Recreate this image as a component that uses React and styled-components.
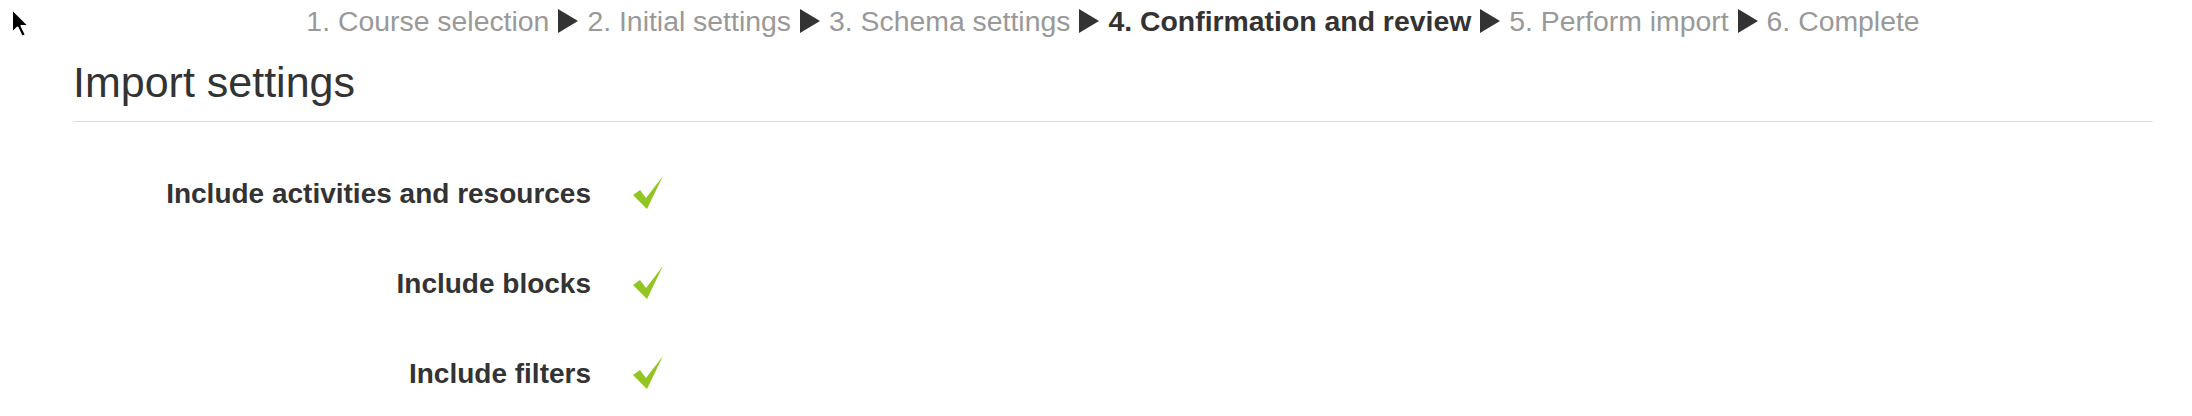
import React from 'react'
import styled, { createGlobalStyle } from 'styled-components'

const GlobalStyle = createGlobalStyle`
  body {
    margin: 0;
    background: #fff;
    font-family: "Liberation Sans", Arial, sans-serif;
    color: #333;
  }
`

const Page = styled.div`
  position: relative;
  padding: 0 39px 0 73px;
  height: 416px;
  overflow: hidden;
`

const Cursor = styled.svg`
  position: absolute;
  left: 10px;
  top: 7px;
`

const Crumbs = styled.div`
  display: flex;
  justify-content: center;
  align-items: center;
  height: 42px;
  font-size: 28.4px;
  color: #999;
  white-space: nowrap;
`

const Step = styled.span`
  color: ${(p) => (p.$current ? '#333' : '#999')};
  font-weight: ${(p) => (p.$current ? 'bold' : 'normal')};
`

const Arrow = styled.span`
  display: inline-block;
  width: 0;
  height: 0;
  margin: 0 9px;
  border-top: 12px solid transparent;
  border-bottom: 12px solid transparent;
  border-left: 20px solid #333;
`

const Heading = styled.h2`
  margin: 0;
  padding: 15px 0 14px;
  font-size: 43px;
  font-weight: normal;
  line-height: 50px;
  color: #333;
  border-bottom: 1px solid #dcdcdc;
`

const Rows = styled.div`
  display: grid;
  grid-template-columns: 518px 1fr;
  column-gap: 41px;
  padding-top: 52px;
`

const Label = styled.div`
  text-align: right;
  font-weight: bold;
  font-size: 28px;
  line-height: 40px;
  height: 88px;
`

const Value = styled.div`
  height: 88px;
  display: flex;
  align-items: flex-start;
  padding-top: 2px;
`

const Check = () => (
  <svg width="32" height="34" viewBox="0 0 32 34">
    <path d="M1 19 L8 14 L14 22 L31 0 L29 4 L15 33 Z" fill="#93c520" />
  </svg>
)

const steps = [
  '1. Course selection',
  '2. Initial settings',
  '3. Schema settings',
  '4. Confirmation and review',
  '5. Perform import',
  '6. Complete',
]

const settings = ['Include activities and resources', 'Include blocks', 'Include filters']

export default function App() {
  return (
    <Page>
      <GlobalStyle />
      <Cursor width="22" height="34" viewBox="0 0 22 34">
        <path d="M2 2 L2 26 L7.5 20.5 L12 30 L16 28 L11.5 19 L19 19 Z" fill="#000" stroke="#fff" strokeWidth="2" strokeLinejoin="round" />
      </Cursor>
      <Crumbs>
        {steps.map((s, i) => (
          <React.Fragment key={s}>
            {i > 0 && <Arrow />}
            <Step $current={i === 3}>{s}</Step>
          </React.Fragment>
        ))}
      </Crumbs>
      <Heading>Import settings</Heading>
      <Rows>
        {settings.map((s) => (
          <React.Fragment key={s}>
            <Label>{s}</Label>
            <Value>
              <Check />
            </Value>
          </React.Fragment>
        ))}
      </Rows>
    </Page>
  )
}
